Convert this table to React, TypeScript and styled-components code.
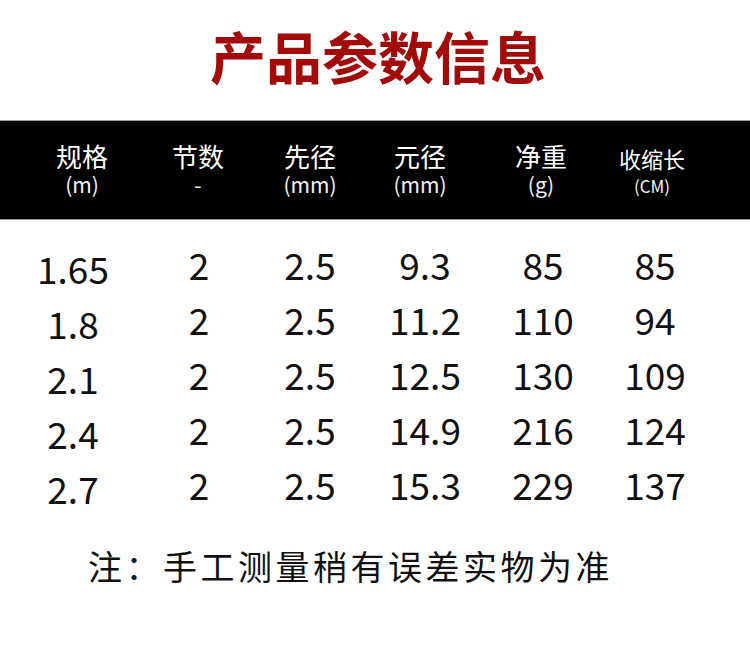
import React from 'react';
import styled, { createGlobalStyle } from 'styled-components';

const GlobalStyle = createGlobalStyle`
  html, body {
    margin: 0;
    padding: 0;
    background: #ffffff;
  }
  body {
    font-family: "Noto Sans CJK SC", "Noto Sans", sans-serif;
  }
`;

const COLUMNS = '20px 122px 112px 112px 116px 120px 106px';

const Page = styled.div`
  width: 750px;
  height: 648px;
  background: #ffffff;
  overflow: hidden;
`;

const Title = styled.h1`
  margin: 0;
  height: 120px;
  padding-bottom: 12px;
  box-sizing: border-box;
  display: flex;
  align-items: center;
  justify-content: center;
  padding-left: 6px;
  font-size: 56px;
  font-weight: 700;
  color: #a30b0b;
`;

const HeaderBand = styled.div`
  display: grid;
  grid-template-columns: ${COLUMNS};
  height: 98px;
  box-sizing: content-box;
  background: #000000;
  border-top: 1px solid #9a9a9a;
  border-bottom: 1px solid #9a9a9a;
`;

const HeaderCell = styled.div<{ $small?: boolean; $nudge?: number }>`
  display: flex;
  flex-direction: column;
  align-items: center;
  padding-top: ${(p) => (p.$small ? 25 : 21)}px;
  padding-left: ${(p) => Math.max(0, p.$nudge ?? 0)}px;
  padding-right: ${(p) => Math.max(0, -(p.$nudge ?? 0))}px;
  color: #ffffff;
`;

const HeaderName = styled.span<{ $small?: boolean }>`
  font-size: ${(p) => (p.$small ? 22 : 26)}px;
  line-height: ${(p) => (p.$small ? 24 : 28)}px;
`;

const HeaderUnit = styled.span<{ $small?: boolean }>`
  font-size: ${(p) => (p.$small ? 17 : 21)}px;
  line-height: 22px;
  margin-top: ${(p) => (p.$small ? 5 : 3)}px;
  color: #f2f2f2;
`;

const Body = styled.div`
  padding-top: 13px;
`;

const Row = styled.div`
  display: grid;
  grid-template-columns: ${COLUMNS};
  height: 55px;
  align-items: center;
`;

const Cell = styled.div<{ $nudge?: number; $drop?: number }>`
  text-align: center;
  font-size: 37px;
  line-height: 55px;
  color: #111111;
  padding-left: ${(p) => Math.max(0, p.$nudge ?? 0)}px;
  padding-right: ${(p) => Math.max(0, -(p.$nudge ?? 0))}px;
  padding-top: ${(p) => p.$drop ?? 0}px;
`;

const Note = styled.p`
  margin: 38px 0 0;
  padding-left: 88px;
  font-size: 34px;
  line-height: 40px;
  letter-spacing: 3.5px;
  color: #111111;
`;

const Spacer = styled.div``;

type Header = { name: string; unit: string; small?: boolean; nudge?: number };

const headers: Header[] = [
  { name: '规格', unit: '(m)', nudge: 2 },
  { name: '节数', unit: '-' },
  { name: '先径', unit: '(mm)' },
  { name: '元径', unit: '(mm)', nudge: -8 },
  { name: '净重', unit: '(g)', nudge: -2 },
  { name: '收缩长', unit: '(CM)', small: true, nudge: -6 },
];

const rows: string[][] = [
  ['1.65', '2', '2.5', '9.3', '85', '85'],
  ['1.8', '2', '2.5', '11.2', '110', '94'],
  ['2.1', '2', '2.5', '12.5', '130', '109'],
  ['2.4', '2', '2.5', '14.9', '216', '124'],
  ['2.7', '2', '2.5', '15.3', '229', '137'],
];

const cellNudge = [-16, 2, 0, 2, 2, 0];

const App = () => (
  <Page>
    <GlobalStyle />
    <Title>产品参数信息</Title>

    <HeaderBand>
      <Spacer />
      {headers.map((h) => (
        <HeaderCell key={h.name} $small={h.small} $nudge={h.nudge}>
          <HeaderName $small={h.small}>{h.name}</HeaderName>
          <HeaderUnit $small={h.small}>{h.unit}</HeaderUnit>
        </HeaderCell>
      ))}
    </HeaderBand>

    <Body>
      {rows.map((row) => (
        <Row key={row[0]}>
          <Spacer />
          {row.map((value, i) => (
            <Cell key={i} $nudge={cellNudge[i]} $drop={i === 0 ? 8 : 0}>
              {value}
            </Cell>
          ))}
        </Row>
      ))}
    </Body>

    <Note>注：手工测量稍有误差实物为准</Note>
  </Page>
);

export default App;
